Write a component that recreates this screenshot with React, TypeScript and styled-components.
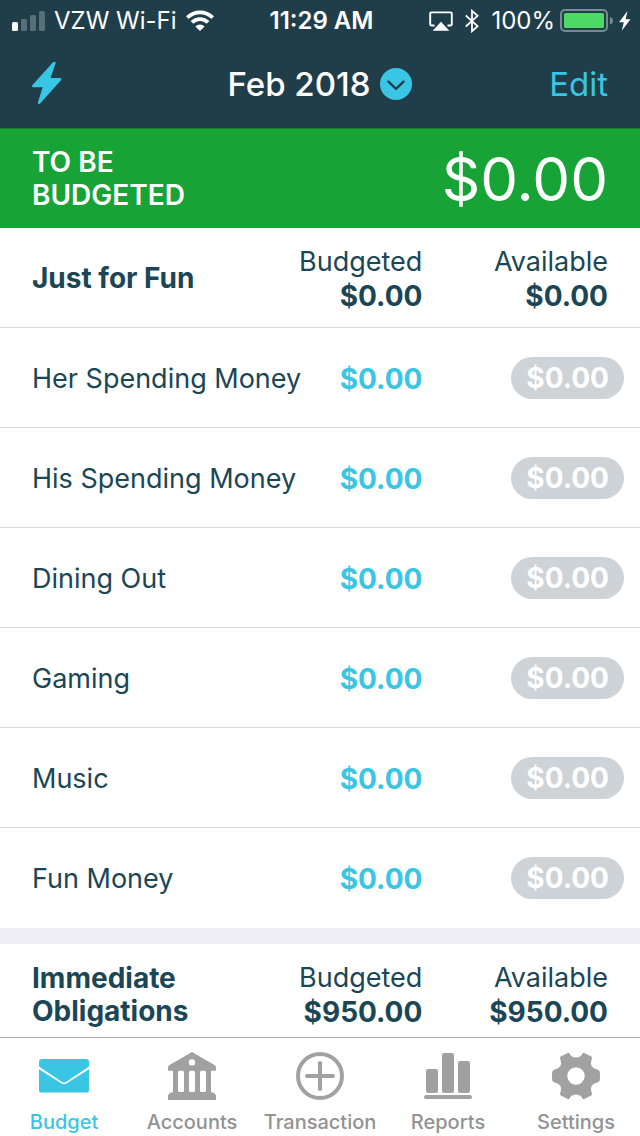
import React from "react";
import styled, { createGlobalStyle } from "styled-components";

const color = {
  navy: "#1f3e4a",
  ink: "#1a4656",
  cyan: "#39c6e5",
  green: "#17a336",
  greenEdge: "#1b7a3a",
  pill: "#cdd3d6",
  line: "#d6d7d9",
  gap: "#efeef4",
  tabLine: "#aeaeae",
  tab: "#929292",
  icon: "#a1a1a1",
};

const GlobalStyle = createGlobalStyle`
  *, *::before, *::after { box-sizing: border-box; }
  body {
    margin: 0;
    background: #ffffff;
    color: ${color.ink};
    font-family: Inter, Roboto, "Liberation Sans", sans-serif;
    font-size: 28px;
    line-height: 34px;
  }
  button {
    margin: 0;
    padding: 0;
    border: 0;
    background: none;
    color: inherit;
    font: inherit;
    cursor: pointer;
  }
  svg { display: block; flex: none; }
`;

const Screen = styled.div`
  display: flex;
  flex-direction: column;
  height: 100vh;
`;

const Top = styled.header`
  flex: none;
  background: ${color.navy};
  color: #ffffff;
`;

const StatusBar = styled.div`
  display: grid;
  grid-template-columns: 1fr auto 1fr;
  align-items: center;
  height: 40px;
  padding: 2px 9px 0 12px;
  font-size: 24px;
  line-height: 36px;
  white-space: nowrap;
`;

const StatusGroup = styled.div<{ $end?: boolean; $gap: number }>`
  display: flex;
  align-items: center;
  justify-content: ${(p) => (p.$end ? "flex-end" : "flex-start")};
  gap: ${(p) => p.$gap}px;
`;

const Clock = styled.time`
  font-weight: 600;
`;

const NavBar = styled.nav`
  display: grid;
  grid-template-columns: 1fr auto 1fr;
  align-items: center;
  height: 88px;
  padding: 0 32px;
  font-size: 33px;
  line-height: 40px;
`;

const QuickButton = styled.button`
  justify-self: start;
`;

const MonthButton = styled.button`
  display: flex;
  align-items: center;
  gap: 10px;
  font-weight: 500;
`;

const EditButton = styled.button`
  justify-self: end;
  color: ${color.cyan};
`;

const Banner = styled.section`
  flex: none;
  display: flex;
  align-items: center;
  justify-content: space-between;
  height: 100px;
  padding: 0 32px;
  border-top: 1px solid ${color.greenEdge};
  background: ${color.green};
  color: #ffffff;
`;

const BannerLabel = styled.h1`
  width: 180px;
  margin: 0;
  padding-top: 1px;
  font-size: 28px;
  font-weight: 600;
  line-height: 33px;
`;

const BannerAmount = styled.output`
  font-size: 60px;
  font-weight: 400;
  line-height: 72px;
`;

const Content = styled.main`
  flex: 1;
  min-height: 0;
  overflow-y: auto;
  scrollbar-width: none;
`;

const BudgetTable = styled.table`
  width: 100%;
  table-layout: fixed;
  border-collapse: separate;
  border-spacing: 0;

  & + & {
    border-top: 16px solid ${color.gap};
  }
`;

const NameCol = styled.col`
  width: 45%;
`;

const BudgetedCol = styled.col`
  width: 21%;
`;

const Row = styled.tr`
  height: 100px;

  & > * {
    padding: 2px 0 0;
    border-bottom: 1px solid ${color.line};
    vertical-align: middle;
  }

  tbody > &:last-child > * {
    border-bottom-color: transparent;
  }
`;

const GroupName = styled.th`
  && { padding-left: 32px; }
  text-align: left;
  font-weight: 700;
  line-height: 33px;
`;

const ColumnHead = styled.th<{ $last?: boolean }>`
  && { padding-right: ${(p) => (p.$last ? 32 : 0)}px; }
  text-align: right;
  font-size: 27px;
  font-weight: 400;
`;

const Total = styled.strong`
  display: block;
  font-size: 28px;
  font-weight: 700;
`;

const CategoryName = styled.th`
  && { padding-left: 32px; }
  text-align: left;
  font-size: 27px;
  font-weight: 400;
  white-space: nowrap;
`;

const BudgetedCell = styled.td`
  text-align: right;
`;

const AvailableCell = styled.td`
  && { padding: 0 16px 0 0; }
  text-align: right;
`;

const BudgetedButton = styled.button`
  color: ${color.cyan};
  font-weight: 700;
`;

const Pill = styled.button`
  height: 42px;
  padding: 1px 15px 0;
  border-radius: 21px;
  background: ${color.pill};
  color: #ffffff;
  font-weight: 700;
  vertical-align: middle;
`;

const TabBar = styled.nav`
  flex: none;
  display: grid;
  grid-template-columns: repeat(5, 1fr);
  height: 99px;
  border-top: 1px solid ${color.tabLine};
  background: #ffffff;
`;

const Tab = styled.button<{ $active?: boolean }>`
  display: flex;
  flex-direction: column;
  align-items: center;
  gap: 10px;
  padding-top: 14px;
  color: ${(p) => (p.$active ? color.cyan : color.tab)};
  font-size: 20px;
  font-weight: 500;
  line-height: 24px;

  svg {
    color: ${(p) => (p.$active ? color.cyan : color.icon)};
  }
`;

const SignalIcon = () => (
  <svg width="33" height="22" viewBox="0 0 33 22" fill="#fff" aria-hidden="true">
    <rect x="0" y="12" width="6" height="9" rx="1.6" />
    <g opacity="0.25">
      <rect x="9" y="9" width="6" height="12" rx="1.6" />
      <rect x="18" y="5" width="6" height="16" rx="1.6" />
      <rect x="27" y="1" width="6" height="20" rx="1.6" />
    </g>
  </svg>
);

const WifiIcon = () => (
  <svg width="28" height="22" viewBox="0 0 28 22" aria-hidden="true">
    <g fill="none" stroke="#fff" strokeWidth="3.8">
      <path d="M1.3 7.6a18 18 0 0 1 25.4 0" />
      <path d="M6 12.4a11.3 11.3 0 0 1 16 0" />
    </g>
    <path d="M9.4 16.4a6.5 6.5 0 0 1 9.2 0L14 21z" fill="#fff" />
  </svg>
);

const AirplayIcon = () => (
  <svg width="24" height="20" viewBox="0 0 24 20" aria-hidden="true">
    <path d="M5.500 14.500H2.500A1.300 1.300 0 0 1 1.200 13.200V2.700a1.300 1.300 0 0 1 1.300-1.300h19a1.300 1.300 0 0 1 1.300 1.300v10.500a1.300 1.300 0 0 1-1.300 1.300H18.500" fill="none" stroke="#fff" strokeWidth="1.900" />
    <path d="M12 10.800 20.300 19.700H3.700z" fill="#fff" />
  </svg>
);

const BluetoothIcon = () => (
  <svg width="14" height="24" viewBox="0 0 14 24" fill="none" stroke="#fff" strokeWidth="1.8" aria-hidden="true">
    <path d="M.8 6.500 12.600 17.200 7 22.200V1.800l5.600 5L.8 17.500" />
  </svg>
);

const BatteryIcon = () => (
  <svg width="54" height="24" viewBox="0 0 54 24" aria-hidden="true">
    <rect x="1" y="1" width="46" height="21" rx="4" fill="none" stroke="#788b92" strokeWidth="2" />
    <rect x="4" y="4" width="40" height="15" rx="1.500" fill="#4cd964" />
    <path d="M50 8c2 .5 3 2 3 3.800s-1 3.300-3 3.800z" fill="#788b92" />
  </svg>
);

const ChargingIcon = () => (
  <svg width="12" height="20" viewBox="0 0 12 20" fill="#fff" aria-hidden="true">
    <path d="M8.500 0 0 11.200h4.800L2.800 19.800 11.500 8.300H6.600z" />
  </svg>
);

const BoltIcon = () => (
  <svg width="30" height="44" viewBox="0 1 30 44" aria-hidden="true">
    <path d="M22.300 1.800 1.300 25h11.200L7.200 41.700 28 18.300H16.800z" fill={color.cyan} stroke={color.cyan} strokeWidth="2.600" strokeLinejoin="round" />
  </svg>
);

const ChevronIcon = () => (
  <svg width="32" height="32" viewBox="0 0 32 32" fill="none" aria-hidden="true">
    <circle cx="16" cy="16" r="16" fill={color.cyan} />
    <path d="m8.500 13.700 7.500 7.200 7.500-7.200" stroke={color.navy} strokeWidth="2.400" strokeLinecap="round" strokeLinejoin="round" />
  </svg>
);

const EnvelopeIcon = () => (
  <svg width="50" height="48" viewBox="0 0 50 48" fill="currentColor" aria-hidden="true">
    <path d="M3 7h44a3 3 0 0 1 3 3v4.500L27 29.900q-2 1.400-4 0L0 14.500V10a3 3 0 0 1 3-3z" />
    <path d="M0 17.300 22.600 31.400q2.400 1.400 4.800 0L50 17.300V38a2.500 2.500 0 0 1-2.500 2.500h-45A2.500 2.500 0 0 1 0 38z" />
  </svg>
);

const BankIcon = () => (
  <svg width="48" height="48" viewBox="0 0 48 48" aria-hidden="true">
    <path
      fill="currentColor"
      fillRule="evenodd"
      d="M24 0 46.500 13q1.500 1 1.500 2.600V18q0 .8-.8.8H43V40q4 .5 5 3.500V47q0 1-1 1H1q-1 0-1-1v-3.500Q1 40.500 5 40V18.800H.8Q0 18.800 0 18v-2.400Q0 14 1.500 13zM24 7.200a3 3 0 1 0 0 6.400 3 3 0 1 0 0-6.400zM11.500 18.800q-1.500 0-1.500 1.600v18q0 1.600 1.500 1.600h3q1.500 0 1.500-1.600v-18q0-1.600-1.500-1.600zM22.500 18.800q-1.500 0-1.500 1.600v18q0 1.600 1.500 1.600h3q1.500 0 1.500-1.600v-18q0-1.600-1.500-1.600zM33.500 18.800q-1.500 0-1.500 1.600v18q0 1.600 1.500 1.600h3q1.500 0 1.500-1.600v-18q0-1.600-1.500-1.600z"
    />
  </svg>
);

const PlusIcon = () => (
  <svg width="48" height="48" viewBox="0 0 48 48" fill="none" stroke="currentColor" strokeWidth="4" aria-hidden="true">
    <circle cx="24" cy="24" r="22" />
    <path d="M24 11v26M11 24h26" strokeLinecap="round" />
  </svg>
);

const ChartIcon = () => (
  <svg width="48" height="48" viewBox="0 0 48 48" fill="currentColor" aria-hidden="true">
    <rect x="2" y="17" width="12" height="24" rx="2" />
    <rect x="18" y="1" width="12" height="40" rx="2" />
    <rect x="34" y="9" width="12" height="32" rx="2" />
    <rect x="0" y="43" width="48" height="4" rx="2" />
  </svg>
);

const GearIcon = () => (
  <svg width="48" height="48" viewBox="0 0 48 48" aria-hidden="true">
    <path
      fill="currentColor"
      fillRule="evenodd"
      d="M15.700.9Q16.700.6 17.400 1.600L19.200 4Q24 7.200 28.800 4L30.600 1.600Q31.300.6 32.300.9L39.200 4.600Q40.200 5.200 39.900 6.400L38.900 10.500Q38.900 15 42.600 16.400L46.400 18Q47.600 18.500 47.800 20Q48.200 24 47.800 28Q47.600 29.500 46.400 30L42.600 31.600Q38.900 33 38.900 37.500L39.900 41.600Q40.200 42.800 39.200 43.400L32.300 47.100Q31.300 47.400 30.600 46.400L28.800 44Q24 40.800 19.200 44L17.400 46.400Q16.700 47.400 15.700 47.100L8.800 43.400Q7.800 42.800 8.100 41.600L9.100 37.500Q9.100 33 5.400 31.600L1.600 30Q.4 29.500.2 28Q-.2 24 .2 20Q.4 18.500 1.600 18L5.400 16.400Q9.100 15 9.100 10.500L8.100 6.400Q7.800 5.200 8.800 4.600ZM24 15.300a8.700 8.700 0 1 0 0 17.400 8.700 8.700 0 1 0 0-17.400z"
    />
  </svg>
);

type Category = { name: string; budgeted: string; available: string };
type Group = { name: string; budgeted: string; available: string; categories: Category[] };

const zero = (name: string): Category => ({ name, budgeted: "$0.00", available: "$0.00" });

const groups: Group[] = [
  {
    name: "Just for Fun",
    budgeted: "$0.00",
    available: "$0.00",
    categories: ["Her Spending Money", "His Spending Money", "Dining Out", "Gaming", "Music", "Fun Money"].map(zero),
  },
  { name: "Immediate Obligations", budgeted: "$950.00", available: "$950.00", categories: [] },
];

const tabs = [
  { label: "Budget", Icon: EnvelopeIcon },
  { label: "Accounts", Icon: BankIcon },
  { label: "Transaction", Icon: PlusIcon },
  { label: "Reports", Icon: ChartIcon },
  { label: "Settings", Icon: GearIcon },
];

const BudgetGroup = ({ group }: { group: Group }) => (
  <BudgetTable>
    <colgroup>
      <NameCol />
      <BudgetedCol />
      <col />
    </colgroup>
    <thead>
      <Row>
        <GroupName scope="col">{group.name}</GroupName>
        <ColumnHead scope="col">
          Budgeted
          <Total>{group.budgeted}</Total>
        </ColumnHead>
        <ColumnHead scope="col" $last>
          Available
          <Total>{group.available}</Total>
        </ColumnHead>
      </Row>
    </thead>
    <tbody>
      {group.categories.map((category) => (
        <Row key={category.name}>
          <CategoryName scope="row">{category.name}</CategoryName>
          <BudgetedCell>
            <BudgetedButton type="button">{category.budgeted}</BudgetedButton>
          </BudgetedCell>
          <AvailableCell>
            <Pill type="button">{category.available}</Pill>
          </AvailableCell>
        </Row>
      ))}
    </tbody>
  </BudgetTable>
);

export default function App() {
  return (
    <Screen>
      <GlobalStyle />
      <Top>
        <StatusBar>
          <StatusGroup $gap={9}>
            <SignalIcon />
            <span>VZW Wi-Fi</span>
            <WifiIcon />
          </StatusGroup>
          <Clock>11:29 AM</Clock>
          <StatusGroup $end $gap={5}>
            <StatusGroup $gap={12}>
              <AirplayIcon />
              <BluetoothIcon />
              <span>100%</span>
            </StatusGroup>
            <BatteryIcon />
            <ChargingIcon />
          </StatusGroup>
        </StatusBar>
        <NavBar aria-label="Month">
          <QuickButton type="button" aria-label="Quick budget">
            <BoltIcon />
          </QuickButton>
          <MonthButton type="button">
            Feb 2018
            <ChevronIcon />
          </MonthButton>
          <EditButton type="button">Edit</EditButton>
        </NavBar>
      </Top>
      <Banner>
        <BannerLabel>TO BE BUDGETED</BannerLabel>
        <BannerAmount>$0.00</BannerAmount>
      </Banner>
      <Content>
        {groups.map((group) => (
          <BudgetGroup key={group.name} group={group} />
        ))}
      </Content>
      <TabBar aria-label="Sections">
        {tabs.map(({ label, Icon }, index) => (
          <Tab key={label} type="button" $active={index === 0} aria-current={index === 0 ? "page" : undefined}>
            <Icon />
            {label}
          </Tab>
        ))}
      </TabBar>
    </Screen>
  );
}
